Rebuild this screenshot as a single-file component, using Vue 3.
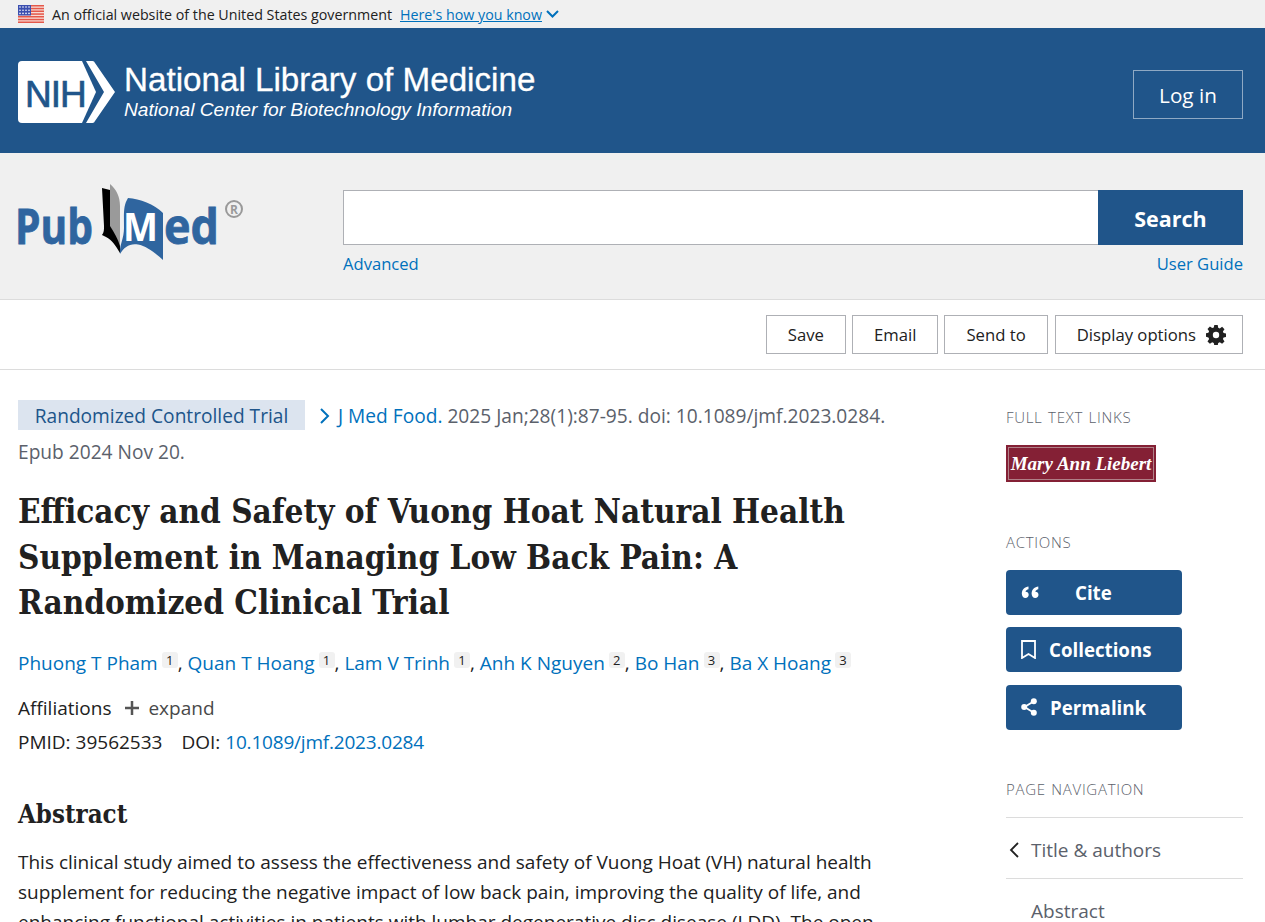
<template>
  <div class="page">
    <div class="gov-banner">
      <svg class="flag" width="26" height="18" viewBox="0 0 26 18">
        <rect width="26" height="18" fill="#f7dcd6" />
        <rect v-for="y in stripes" :key="y" x="0" :y="y" width="26" height="1.5" fill="#e4584a" />
        <rect width="13" height="10.5" fill="#3b4fb0" />
        <circle v-for="s in stars" :key="s.x + '-' + s.y" :cx="s.x" :cy="s.y" r="0.8" fill="#fff" />
      </svg>
      <span class="gov-text">An official website of the United States government</span>
      <a class="gov-link">Here's how you know</a>
      <svg class="gov-chevron" width="13" height="8" viewBox="0 0 13 8">
        <path d="M1 1l5.5 5.5L12 1" fill="none" stroke="#0071bc" stroke-width="2" />
      </svg>
    </div>

    <header class="ncbi-header">
      <div class="ncbi-brand">
        <svg class="nih-mark" width="98" height="62" viewBox="0 0 98 62">
          <path d="M4 0H64L78 31 64 62H4a4 4 0 0 1-4-4V4a4 4 0 0 1 4-4z" fill="#fff" />
          <path d="M68 0h6a3 3 0 0 1 3 2l20 29-20 29a3 3 0 0 1-3 2h-6l18-31z" fill="#fff" />
          <text x="7" y="46" class="nih-text">NIH</text>
        </svg>
        <div class="ncbi-names">
          <div class="ncbi-title">National Library of Medicine</div>
          <div class="ncbi-sub">National Center for Biotechnology Information</div>
        </div>
      </div>
      <a class="login">Log in</a>
    </header>

    <section class="search-band">
      <div class="pubmed-logo">
        <svg width="232" height="77" viewBox="-6 0 232 77">
          <text x="-3" y="60" class="pm-word" textLength="78" lengthAdjust="spacingAndGlyphs">Pub</text>
          <path d="M92 0C98 5 102 12 102 22V68C100 58 97 50 92 44Z" fill="#9a9a9a" />
          <path d="M84 4L92 6V42C96 48 100 55 102 62V69C98 62 94 56 88 53L84 51C86 48 86 46 86 42Z" fill="#000" />
          <path d="M110 14C122 15 136 20 145 29V76C136 68 128 62 120 60.5C112 59 106 63 102 70C101 62 106 55 106 44C106 30 105 22 110 14Z" fill="#2f659f" />
          <text x="105" y="57" class="pm-m" textLength="35" lengthAdjust="spacingAndGlyphs">M</text>
          <text x="146" y="60" class="pm-word" textLength="55" lengthAdjust="spacingAndGlyphs">ed</text>
          <circle cx="216" cy="25" r="8" fill="none" stroke="#999" stroke-width="2" />
          <text x="212" y="29.5" class="pm-r">R</text>
        </svg>
      </div>
      <div class="search-col">
        <div class="search-row">
          <div class="search-input"></div>
          <button class="search-btn">Search</button>
        </div>
        <div class="search-links">
          <a>Advanced</a>
          <a>User Guide</a>
        </div>
      </div>
    </section>

    <div class="action-bar">
      <button v-for="b in barButtons" :key="b" class="bar-btn">{{ b }}</button>
      <button class="bar-btn display-btn">
        Display options
        <svg width="20" height="20" viewBox="0 0 20 20">
          <path d="M8.3 0h3.4l.5 2.7 1.6.7 2.3-1.6 2.4 2.4-1.6 2.3.7 1.6 2.7.5v3.4l-2.7.5-.7 1.6 1.6 2.3-2.4 2.4-2.3-1.6-1.6.7-.5 2.7H8.3l-.5-2.7-1.6-.7-2.3 1.6-2.4-2.4 1.6-2.3-.7-1.6L-.3 11.7V8.3l2.7-.5.7-1.6-1.6-2.3 2.4-2.4 2.3 1.6 1.6-.7z" fill="#212121" />
          <circle cx="10" cy="10" r="3.2" fill="#fff" />
        </svg>
      </button>
    </div>

    <div class="content">
      <main class="article">
        <div class="cite-line">
          <span class="pub-type">Randomized Controlled Trial</span>
          <svg class="cite-chevron" width="11" height="16" viewBox="0 0 11 16">
            <path d="M2 1l7 7-7 7" fill="none" stroke="#0071bc" stroke-width="2" />
          </svg>
          <a class="journal">J Med Food.</a>
          <span> 2025 Jan;28(1):87-95. doi: 10.1089/jmf.2023.0284.</span>
          <br />
          <span>Epub 2024 Nov 20.</span>
        </div>

        <h1 class="title">Efficacy and Safety of Vuong Hoat Natural Health Supplement in Managing Low Back Pain: A Randomized Clinical Trial</h1>

        <div class="authors">
          <template v-for="(a, i) in authors" :key="a.name">
            <a>{{ a.name }}</a><sup class="aff">{{ a.aff }}</sup><span v-if="i < authors.length - 1">, </span>
          </template>
        </div>

        <div class="affiliations">
          <span>Affiliations</span>
          <svg width="16" height="16" viewBox="0 0 16 16">
            <path d="M8 1v14M1 8h14" stroke="#555" stroke-width="2.5" />
          </svg>
          <span class="expand">expand</span>
        </div>

        <div class="ids">
          <span>PMID: 39562533</span>
          <span>DOI: <a class="doi">10.1089/jmf.2023.0284</a></span>
        </div>

        <h2 class="abstract-head">Abstract</h2>
        <p class="abstract">This clinical study aimed to assess the effectiveness and safety of Vuong Hoat (VH) natural health supplement for reducing the negative impact of low back pain, improving the quality of life, and enhancing functional activities in patients with lumbar degenerative disc disease (LDD). The open-</p>
      </main>

      <aside class="sidebar">
        <h3 class="side-head">FULL TEXT LINKS</h3>
        <div class="liebert"><span>Mary Ann Liebert</span></div>

        <h3 class="side-head actions-head">ACTIONS</h3>
        <button class="side-btn">
          <svg class="ic-cite" width="18" height="14" viewBox="0 0 18 13">
            <path d="M7.5 1C4 1.5 1 3.5 .8 8c0 2.500 1.500 4.500 3.600 4.500 2 0 3.300-1.500 3.300-3.200 0-1.900-1.400-3.100-3.200-3 .3-1.300 1.500-2.200 3-2.500zM17.300 1c-3.500.5-6.500 2.500-6.700 7 0 2.500 1.500 4.500 3.600 4.500 2 0 3.300-1.500 3.300-3.200 0-1.900-1.400-3.100-3.200-3 .3-1.300 1.500-2.200 3-2.500z" fill="#fff" />
          </svg>
          <span class="cite-label">Cite</span>
        </button>
        <button class="side-btn">
          <svg class="ic-book" width="15" height="19" viewBox="0 0 15 19">
            <path d="M1 1h13v17l-6.5-4L1 18z" fill="none" stroke="#fff" stroke-width="1.8" />
          </svg>
          <span>Collections</span>
        </button>
        <button class="side-btn">
          <svg class="ic-share" width="16" height="18" viewBox="0 0 16 18">
            <path d="M12.5 3.5L3.5 9l9 5.5" fill="none" stroke="#fff" stroke-width="1.8" />
            <circle cx="12.8" cy="3.3" r="3" fill="#fff" />
            <circle cx="3.2" cy="9" r="3" fill="#fff" />
            <circle cx="12.8" cy="14.7" r="3" fill="#fff" />
          </svg>
          <span>Permalink</span>
        </button>

        <h3 class="side-head nav-head">PAGE NAVIGATION</h3>
        <div class="nav-item first">
          <svg width="10" height="16" viewBox="0 0 10 16">
            <path d="M9 1L2 8l7 7" fill="none" stroke="#212121" stroke-width="1.8" />
          </svg>
          <span>Title &amp; authors</span>
        </div>
        <div class="nav-item sub"><span>Abstract</span></div>
      </aside>
    </div>
  </div>
</template>

<script setup>
const stripes = [0, 2.8, 5.5, 8.3, 11, 13.8, 16.5]
const stars = []
for (let r = 0; r < 3; r++) {
  for (let c = 0; c < 4; c++) {
    stars.push({ x: 2 + c * 3, y: 2 + r * 3.2 })
  }
}

const barButtons = ['Save', 'Email', 'Send to']

const authors = [
  { name: 'Phuong T Pham', aff: 1 },
  { name: 'Quan T Hoang', aff: 1 },
  { name: 'Lam V Trinh', aff: 1 },
  { name: 'Anh K Nguyen', aff: 2 },
  { name: 'Bo Han', aff: 3 },
  { name: 'Ba X Hoang', aff: 3 }
]
</script>

<style>
html, body {
  overflow: hidden;
}
</style>

<style scoped>
.page {
  width: 1265px;
  height: 922px;
  overflow: hidden;
  background: #fff;
  color: #212121;
  font-family: "Open Sans", "Noto Sans", sans-serif;
}
a {
  color: #0071bc;
}

.gov-banner {
  height: 28px;
  background: #f0f0f0;
  display: flex;
  align-items: center;
  padding-left: 18px;
  font-size: 14.25px;
}
.flag {
  margin-right: 8px;
}
.gov-text {
  margin-right: 8px;
}
.gov-link {
  text-decoration: underline;
}
.gov-chevron {
  margin-left: 4px;
}

.ncbi-header {
  height: 125px;
  box-sizing: border-box;
  background: #20558a;
  display: flex;
  align-items: center;
  justify-content: space-between;
  padding: 3px 22px 0 18px;
}
.ncbi-brand {
  display: flex;
  align-items: center;
  gap: 8px;
}
.nih-text {
  font-family: "Liberation Sans", sans-serif;
  font-size: 37px;
  fill: #20558a;
  stroke: #20558a;
  stroke-width: 0.7px;
  letter-spacing: -1px;
}
.ncbi-names {
  color: #fff;
  font-family: "Liberation Sans", sans-serif;
}
.ncbi-title {
  font-size: 33.2px;
  line-height: 36px;
  -webkit-text-stroke: 0.3px #fff;
}
.ncbi-sub {
  font-size: 19.2px;
  font-style: italic;
  line-height: 24px;
}
.login {
  width: 110px;
  height: 49px;
  margin-top: 5px;
  border: 1px solid #8fa9c4;
  box-sizing: border-box;
  color: #fff;
  font-size: 20.7px;
  display: flex;
  align-items: center;
  justify-content: center;
}

.search-band {
  height: 147px;
  box-sizing: border-box;
  background: #f0f0f0;
  border-bottom: 1px solid #dcdcdc;
  display: flex;
  padding: 0 22px 0 18px;
}
.pubmed-logo {
  width: 325px;
  padding-top: 31px;
  box-sizing: border-box;
}
.pubmed-logo svg {
  margin-left: -6px;
}
.pm-word {
  font-family: "Open Sans", sans-serif;
  font-weight: 700;
  font-size: 49px;
  fill: #2f659f;
  stroke: #2f659f;
  stroke-width: 0.8px;
}
.pm-m {
  font-family: "Open Sans", sans-serif;
  font-weight: 700;
  font-size: 39px;
  fill: #fff;
}
.pm-r {
  font-family: "Open Sans", sans-serif;
  font-weight: 700;
  font-size: 12px;
  fill: #999;
}
.search-col {
  flex: 1;
  padding-top: 37px;
}
.search-row {
  display: flex;
  height: 55px;
}
.search-input {
  flex: 1;
  background: #fff;
  border: 1px solid #aeb0b5;
  border-right: 0;
}
.search-btn {
  width: 145px;
  padding: 2px 0 0;
  background: #20558a;
  border: 0;
  color: #fff;
  font-family: inherit;
  font-weight: 700;
  font-size: 21.5px;
}
.search-links {
  display: flex;
  justify-content: space-between;
  font-size: 16.6px;
  margin-top: 7px;
}

.action-bar {
  height: 70px;
  box-sizing: border-box;
  border-bottom: 1px solid #dcdcdc;
  display: flex;
  justify-content: flex-end;
  align-items: center;
  gap: 6px;
  padding-right: 22px;
}
.bar-btn {
  height: 39px;
  padding: 0 21px;
  background: #fff;
  border: 1px solid #aeb0b5;
  color: #212121;
  font-family: inherit;
  font-size: 16.7px;
}
.display-btn {
  display: flex;
  align-items: center;
  gap: 10px;
  margin-left: 1px;
  padding-right: 16px;
}

.content {
  display: flex;
  justify-content: space-between;
  padding: 28px 22px 0 18px;
}
.article {
  width: 870px;
}
.cite-line {
  font-size: 19.15px;
  line-height: 36px;
  color: #5b616b;
}
.pub-type {
  display: inline-block;
  width: 287px;
  height: 30px;
  line-height: 33px;
  text-align: center;
  background: #dce4ef;
  color: #20558a;
  margin-right: 14px;
}
.cite-chevron {
  margin-right: 8px;
  vertical-align: -1px;
}
.journal {
  color: #0071bc;
}
.title {
  margin: 19px 0 0;
  font-family: "DejaVu Serif Condensed", "DejaVu Serif", serif;
  font-weight: 700;
  font-size: 33px;
  line-height: 45.5px;
  color: #212121;
}
.authors {
  margin-top: 19px;
  font-size: 19px;
  line-height: 36px;
}
.aff {
  display: inline-block;
  background: #f1f1f1;
  color: #212121;
  font-size: 13px;
  line-height: 16px;
  width: 16px;
  text-align: center;
  margin-left: 4px;
  border-radius: 3px;
  vertical-align: 5px;
}
.affiliations {
  display: flex;
  align-items: center;
  gap: 13px;
  margin-top: 9px;
  font-size: 19px;
  line-height: 36px;
}
.expand {
  color: #494949;
  margin-left: -5px;
}
.ids {
  display: flex;
  gap: 19px;
  font-size: 19px;
  line-height: 32px;
  margin-top: 0;
}
.doi {
  letter-spacing: -0.2px;
}
.abstract-head {
  margin: 38px 0 0;
  font-family: "DejaVu Serif Condensed", "DejaVu Serif", serif;
  font-size: 25.6px;
  line-height: 36px;
  color: #212121;
}
.abstract {
  margin: 15px 0 0;
  font-size: 19px;
  line-height: 30px;
}

.sidebar {
  width: 237px;
  padding-top: 10px;
}
.side-head {
  margin: 0;
  font-size: 15px;
  font-weight: 300;
  color: #5b616b;
  line-height: 18px;
  letter-spacing: 0.7px;
  word-spacing: 1px;
}
.liebert {
  width: 150px;
  height: 37px;
  margin-top: 19px;
  box-sizing: border-box;
  background: #842035;
  border: 1px solid #842035;
  outline: 1px solid #b08088;
  outline-offset: -3px;
  color: #fff;
  display: flex;
  align-items: center;
  justify-content: center;
}
.liebert span {
  font-family: "Liberation Serif", serif;
  font-style: italic;
  font-weight: 700;
  font-size: 19px;
  white-space: nowrap;
}
.actions-head {
  margin-top: 51px;
  margin-bottom: 18.5px;
}
.side-btn {
  display: flex;
  align-items: center;
  width: 176px;
  height: 45px;
  margin-bottom: 12.5px;
  padding: 0 0 0 15px;
  background: #20558a;
  border: 0;
  border-radius: 4px;
  color: #fff;
  font-family: inherit;
  font-weight: 700;
  font-size: 18.7px;
}
.side-btn span {
  margin-left: 13px;
}
.side-btn .cite-label {
  margin-left: 36px;
}
.nav-head {
  margin-top: 50px;
  margin-bottom: 19px;
}
.nav-item {
  height: 61px;
  box-sizing: border-box;
  border-top: 1px solid #dcdcdc;
  display: flex;
  align-items: center;
  padding-top: 5px;
  font-size: 19px;
  color: #5b616b;
}
.nav-item svg {
  margin: 0 12px 0 3px;
}
.nav-item.sub {
  padding-left: 25px;
}
</style>
